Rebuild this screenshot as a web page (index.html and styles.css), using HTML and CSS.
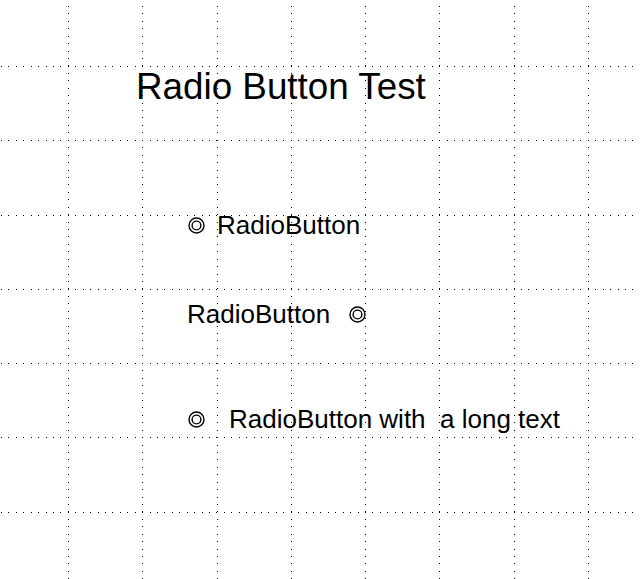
FILE: index.html
```html
<!DOCTYPE html>
<html>
<head>
<meta charset="utf-8">
<link rel="stylesheet" href="styles.css">
</head>
<body>
<svg class="grid" width="640" height="579" shape-rendering="crispEdges">
  <g stroke="#000" stroke-width="1" stroke-dasharray="1 6.433" fill="none">
    <path d="M68.5 6 V579 M142.5 6 V579 M217.5 6 V579 M291.5 6 V579 M365.5 6 V579 M439.5 6 V579 M514.5 6 V579 M588.5 6 V579"/>
  </g>
  <g stroke="#000" stroke-width="1" stroke-dasharray="1 6.4286" fill="none">
    <path d="M1 66.5 H640 M1 140.5 H640 M1 215.5 H640 M1 289.5 H640 M1 363.5 H640 M1 437.5 H640 M1 512.5 H640"/>
  </g>
</svg>
<main class="content">
  <h1 class="title">Radio Button Test</h1>
  <div class="rows">
    <div class="row row-1">
      <svg class="radio" width="17" height="17" viewBox="0 0 17 17"><circle cx="8.5" cy="8.5" r="7.5" fill="none" stroke="#000" stroke-width="1.4"/><circle cx="8.5" cy="8.5" r="4.4" fill="none" stroke="#000" stroke-width="1.4"/></svg>
      <span class="label">RadioButton</span>
    </div>
    <div class="row row-2">
      <span class="label">RadioButton</span>
      <svg class="radio" width="17" height="17" viewBox="0 0 17 17"><circle cx="8.5" cy="8.5" r="7.5" fill="none" stroke="#000" stroke-width="1.4"/><circle cx="8.5" cy="8.5" r="4.4" fill="none" stroke="#000" stroke-width="1.4"/></svg>
    </div>
    <div class="row row-3">
      <svg class="radio" width="17" height="17" viewBox="0 0 17 17"><circle cx="8.5" cy="8.5" r="7.5" fill="none" stroke="#000" stroke-width="1.4"/><circle cx="8.5" cy="8.5" r="4.4" fill="none" stroke="#000" stroke-width="1.4"/></svg>
      <span class="label">RadioButton with&nbsp; a long text</span>
    </div>
  </div>
</main>
</body>
</html>
```
FILE: styles.css
```css
html, body {
  margin: 0;
  padding: 0;
  background: #fff;
}
body {
  width: 640px;
  height: 579px;
  position: relative;
  overflow: hidden;
  font-family: "Liberation Sans", Arial, sans-serif;
  color: #000;
}
.grid {
  position: absolute;
  left: 0;
  top: 0;
}
.content {
  position: relative;
  padding: 67px 0 0 136px;
}
.title {
  margin: 0;
  font-size: 36.8px;
  line-height: 40px;
  font-weight: normal;
}
.rows {
  margin: 103px 0 0 52px;
  display: flex;
  flex-direction: column;
}
.row {
  display: flex;
  align-items: center;
  height: 30px;
  font-size: 26px;
  line-height: 30px;
}
.radio {
  flex: none;
  display: block;
}
.row-1 { gap: 12px; }
.row-2 { gap: 19px; margin-top: 59px; margin-left: -1px; }
.row-3 { gap: 24px; margin-top: 75px; }
.label {
  white-space: pre;
}
```
